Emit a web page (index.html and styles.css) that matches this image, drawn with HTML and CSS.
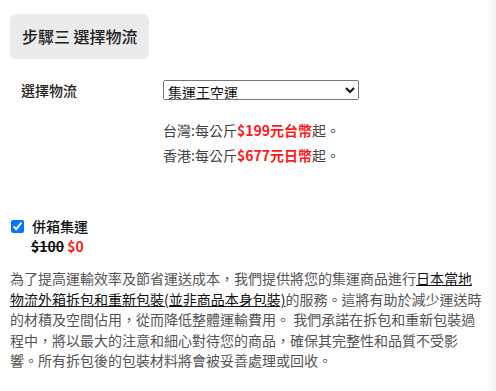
FILE: index.html
```html
<!DOCTYPE html>
<html lang="zh-Hant">
<head>
  <meta charset="UTF-8" />
  <meta name="viewport" content="width=device-width, initial-scale=1" />
  <title>步驟三 選擇物流</title>
  <link rel="stylesheet" href="styles.css">
</head>
<body>
  <div class="step">
    <h3 class="step-title">步驟三 選擇物流</h3>

    <div class="field">
      <label class="field-label" for="shipping">選擇物流</label>
      <select id="shipping" class="field-select">
        <option>集運王空運</option>
        <option>集運王海運</option>
      </select>
    </div>

    <div class="prices">
      <p>台灣:每公斤<span class="hot">$199元台幣</span>起。</p>
      <p>香港:每公斤<span class="hot">$677元日幣</span>起。</p>
    </div>

    <div class="addon">
      <label class="addon-label"><input type="checkbox" checked> 併箱集運</label>
      <div class="addon-price"><s>$100</s> <span class="hot">$0</span></div>
    </div>

    <p class="desc">為了提高運輸效率及節省運送成本，我們提供將您的集運商品進行<u>日本當地</u><u>物流外箱拆包和重新包裝(並非商品本身包裝)</u>的服務。這將有助於減少運送時的材積及空間佔用，從而降低整體運輸費用。 我們承諾在拆包和重新包裝過程中，將以最大的注意和細心對待您的商品，確保其完整性和品質不受影響。所有拆包後的包裝材料將會被妥善處理或回收。</p>
  </div>
</body>
</html>
```

FILE: styles.css
```css
html {
  background: linear-gradient(to right, #fff calc(100% - 9px), #f2f2f2);
  min-height: 100%;
}
body {
  font-family: "Noto Sans CJK TC", "Noto Sans", sans-serif;
  margin: 0;
  padding: 14px 12px 0 10px;
  color: #333;
  font-size: 14px;
}
.step-title {
  display: inline-block;
  margin: 0;
  padding: 0 11px 0 12px;
  height: 45px;
  line-height: 45px;
  font-size: 16px;
  font-weight: 500;
  color: #222;
  background: #ebebeb;
  border-radius: 6px;
}
.field {
  display: flex;
  align-items: center;
  margin-top: 21px;
}
.field-label {
  width: 142px;
  padding-left: 11px;
  font-weight: 500;
  color: #222;
}
.field-select {
  width: 196px;
  height: 20px;
  font-family: inherit;
  font-size: 14px;
  color: #111;
  padding: 0;
  margin: 0;
}
.prices {
  margin: 18px 0 0 153px;
  color: #444;
}
.prices p {
  margin: 0;
  line-height: 25px;
}
.hot {
  color: #ff1a1a;
  font-weight: bold;
}
.addon {
  margin-top: 48px;
}
.addon-label {
  display: flex;
  align-items: center;
  font-weight: 500;
  color: #111;
  line-height: 20px;
}
.addon-label input {
  margin: 0 8px 0 1px;
  width: 13px;
  height: 13px;
}
.addon-price {
  margin-left: 21px;
  font-weight: bold;
  line-height: 20px;
  color: #111;
}
.desc {
  margin: 12px 0 0 0;
  font-size: 14px;
  line-height: 20.5px;
  color: #555;
}
.desc u {
  color: #111;
}
```
